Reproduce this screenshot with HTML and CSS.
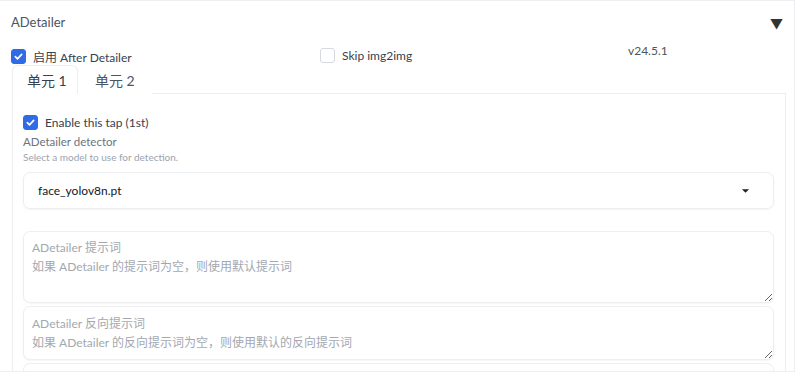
FILE: index.html
```html
<!DOCTYPE html>
<html lang="zh">

<head>
  <meta charset="UTF-8" />
  <meta name="viewport" content="width=device-width, initial-scale=1.0" />
  <title>ADetailer</title>
  <link rel="stylesheet" href="styles.css">
</head>

<body>
  <div class="accordion">
    <div class="acc-head">
      <span class="acc-title">ADetailer</span>
      <span class="acc-icon">&#9660;</span>
    </div>

    <div class="top-row">
      <label class="check">
        <span class="box on"><svg viewBox="0 0 14 14"><path d="M3.6 7.2l2.3 2.3 4.5-4.8" /></svg></span>
        <span>启用 After Detailer</span>
      </label>
      <label class="check">
        <span class="box"></span>
        <span>Skip img2img</span>
      </label>
      <span class="version">v24.5.1</span>
    </div>

    <!-- tabs -->
    <div class="tabs">
      <div class="tab-nav">
        <button class="tab selected">单元 1</button>
        <button class="tab">单元 2</button>
        <div class="tab-fill"></div>
      </div>
      <div class="tab-panel">
        <label class="check">
          <span class="box on"><svg viewBox="0 0 14 14"><path d="M3.6 7.2l2.3 2.3 4.5-4.8" /></svg></span>
          <span>Enable this tap (1st)</span>
        </label>
        <div class="label">ADetailer detector</div>
        <div class="info">Select a model to use for detection.</div>
        <div class="dropdown">
          <span>face_yolov8n.pt</span>
          <svg class="caret" viewBox="0 0 10 6"><path d="M1 1h8L5 5z" /></svg>
        </div>

        <textarea class="prompt first" rows="3" placeholder="ADetailer 提示词&#10;如果 ADetailer 的提示词为空，则使用默认提示词"></textarea>
        <textarea class="prompt" rows="2" placeholder="ADetailer 反向提示词&#10;如果 ADetailer 的反向提示词为空，则使用默认的反向提示词"></textarea>
        <div class="prompt stub"></div>
      </div>
    </div>
  </div>
</body>

</html>
```

FILE: styles.css
```css
html,
body {
  background: #fff;
  margin: 0;
  padding: 0;
}

body {
  font-family: Lato, 'Noto Sans CJK SC', sans-serif;
  color: #374151;
  font-size: 12px;
  overflow: hidden;
}

.accordion {
  width: 796px;
  margin-left: -1px;
  border: 1px solid #eceef1;
  border-left: none;
  box-sizing: border-box;
  height: 372px;
  overflow: hidden;
}

.acc-head {
  display: flex;
  align-items: center;
  justify-content: space-between;
  height: 42px;
  padding: 0 11px 0 12px;
}

.acc-title {
  font-size: 13px;
  color: #4b5563;
}

.acc-icon {
  font-size: 13px;
  color: #333;
}

.top-row {
  display: grid;
  grid-template-columns: 309px 308px auto;
  align-items: start;
  padding-left: 12px;
  height: 22px;
}

.check {
  display: flex;
  align-items: center;
  gap: 7px;
  font-size: 12px;
  color: #374151;
  margin-top: 5px;
  white-space: nowrap;
}

.box {
  width: 13px;
  height: 13px;
  border: 1px solid #d6d9de;
  border-radius: 3px;
  background: #fff;
  display: grid;
  place-items: center;
}

.box.on {
  background: #2f6be6;
  border-color: #2f6be6;
}

.box svg {
  width: 13px;
  height: 13px;
  fill: none;
  stroke: #fff;
  stroke-width: 1.8;
  stroke-linecap: round;
  stroke-linejoin: round;
}

.version {
  font-size: 12px;
  color: #4b5563;
  margin-top: 0;
}

.tabs {
  margin-left: 13px;
  margin-right: 8px;
}

.tab-nav {
  display: flex;
  align-items: flex-end;
  height: 29px;
}

.tab {
  font-family: inherit;
  font-size: 14px;
  color: #4b5563;
  background: none;
  border: 1px solid transparent;
  border-bottom: none;
  border-radius: 6px 6px 0 0;
  height: 29px;
  padding: 0 16px;
  white-space: nowrap;
  box-sizing: border-box;
  cursor: pointer;
}

.tab.selected {
  border-color: #eceef1;
  background: #fff;
  width: 66px;
  padding: 0 14px;
  color: #374151;
}

.tab-fill {
  flex: 1;
  border-bottom: 1px solid #eceef1;
}

.tab-panel {
  border: 1px solid #eceef1;
  border-top: none;
  padding: 21px 11px 20px 10px;
  height: 300px;
}

.tab-panel .check {
  margin-top: 0;
}

.label {
  font-size: 11.5px;
  color: #6b7280;
  margin-top: 5px;
}

.info {
  font-size: 10px;
  color: #9ca3af;
  margin-top: 3px;
}

.dropdown {
  display: flex;
  align-items: center;
  justify-content: space-between;
  margin-top: 9px;
  height: 35px;
  border: 1px solid #eceef1;
  border-radius: 7px;
  box-shadow: 0 1px 2px rgba(0, 0, 0, 0.05);
  padding: 0 23px 0 14px;
  font-size: 12px;
  color: #111827;
}

.caret {
  width: 9px;
  height: 6px;
  fill: #222;
}

.prompt {
  display: block;
  width: 100%;
  box-sizing: border-box;
  border: 1px solid #eceef1;
  border-radius: 7px;
  box-shadow: 0 1px 2px rgba(0, 0, 0, 0.04);
  padding: 6px 8px;
  font-family: Lato, 'Noto Sans CJK SC', sans-serif;
  font-size: 12px;
  line-height: 19px;
  color: #374151;
  resize: vertical;
  outline: none;
  margin-top: 3px;
}

.prompt.first {
  margin-top: 22px;
  height: 72px;
}

.prompt:not(.first):not(.stub) {
  height: 54px;
  padding-top: 7px;
}

.prompt::placeholder {
  color: #a3a8b0;
}

.stub {
  height: 20px;
}
```
